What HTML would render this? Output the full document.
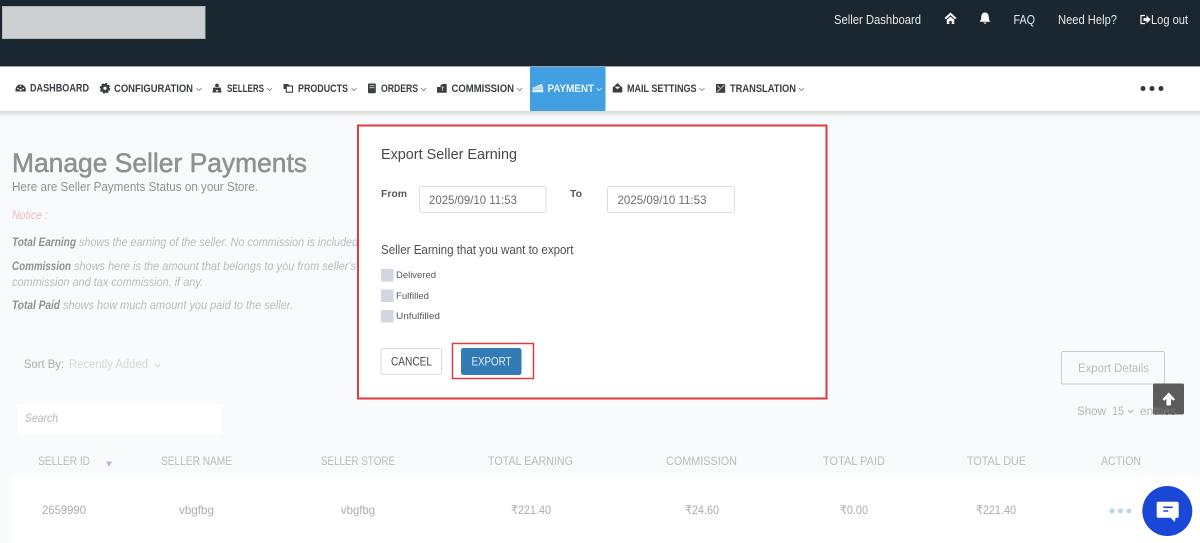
<!DOCTYPE html>
<html><head><meta charset="utf-8"><title>Manage Seller Payments</title>
<style>
html,body{margin:0;padding:0;width:1200px;height:543px;overflow:hidden;background:#f9fafc}
svg{display:block;position:absolute;left:0;top:0;filter:blur(.3px)}
text{font-family:"Liberation Sans",sans-serif;white-space:pre}
.n{font-size:11px;font-weight:bold;fill:#3b3f44}
.t{font-size:12.5px;fill:#e6e9eb}
.h{font-size:12px;fill:#b9bcbf}
.r{font-size:12px;fill:#a9acaf}
.p{font-size:11.5px;font-style:italic;fill:#b9bcbe}
.b{font-size:11.5px;font-style:italic;font-weight:bold;fill:#8e9194}
.c{fill:none;stroke:#777;stroke-width:.8}
</style></head><body>
<svg width="1200" height="543" viewBox="0 0 1200 543" xmlns="http://www.w3.org/2000/svg">
<defs><linearGradient id="s" x1="0" x2="0" y1="0" y2="1"><stop offset="0" stop-color="#d8dad6"/><stop offset="1" stop-color="#f9fafc"/></linearGradient>
<linearGradient id="e" gradientUnits="userSpaceOnUse" x1="1140" x2="1176" y1="0" y2="0"><stop offset="0" stop-color="#b5b7ba"/><stop offset=".36" stop-color="#b5b7ba"/><stop offset=".37" stop-color="#7a7b7d"/><stop offset="1" stop-color="#7a7b7d"/></linearGradient></defs>
<rect width="1200" height="543" fill="#f9fafc"/>
<!-- header -->
<rect width="1200" height="66" fill="#1a2731"/>
<rect x="2.5" y="6.5" width="202.500" height="32" fill="#cdd0d2" stroke="#b4b8ba"/>
<text class="t" x="834" y="24" textLength="87" lengthAdjust="spacingAndGlyphs">Seller Dashboard</text>
<path d="M950.500 12.500 L944.500 18 L946 19.300 L950.500 15.300 L955 19.300 L956.500 18 Z M946.800 19.800 L950.500 16.600 L954.200 19.800 L954.200 24 L951.700 24 L951.700 21 L949.300 21 L949.300 24 L946.800 24Z" fill="#fff"/>
<path d="M985 12.500 C987.800 12.500 988.800 15 988.800 17.500 C988.800 19.800 989.800 21 990.500 21.800 L979.500 21.800 C980.200 21 981.200 19.800 981.200 17.500 C981.200 15 982.200 12.500 985 12.500Z M983.200 22.500 L986.800 22.500 L985 24Z" fill="#fff"/>
<text class="t" x="1013.500" y="24" textLength="21.500" lengthAdjust="spacingAndGlyphs">FAQ</text>
<text class="t" x="1058" y="24" textLength="59" lengthAdjust="spacingAndGlyphs">Need Help?</text>
<path d="M1145 15.500 L1141 15.500 L1141 23.500 L1145 23.500" fill="none" stroke="#fff" stroke-width="1.200"/>
<path d="M1143.500 18 L1146.500 18 L1146.500 15.500 L1150.700 19.500 L1146.500 23.500 L1146.500 21 L1143.500 21Z" fill="#fff"/>
<text class="t" x="1151" y="24" textLength="37" lengthAdjust="spacingAndGlyphs">Log out</text>
<!-- nav -->
<rect y="111" width="1200" height="6" fill="url(#s)"/>
<rect y="66" width="1200" height="45" fill="#fff"/>
<rect y="66" width="1200" height="1" fill="#9aa3a8"/>
<rect x="530" y="67" width="75.500" height="44" fill="#42a0e2"/>
<!-- dashboard -->
<path d="M15.500 91.500 L15.500 89 A5.200 5.200 0 0 1 25.800 89 L25.800 91.500 Z" fill="#3b3f44"/>
<circle cx="18" cy="88.500" r=".8" fill="#fff"/><circle cx="20.600" cy="86.300" r=".8" fill="#fff"/><circle cx="23.200" cy="88.500" r=".8" fill="#fff"/><circle cx="20.600" cy="89.800" r="1" fill="#fff"/>
<text class="n" x="30" y="91.700" textLength="59" lengthAdjust="spacingAndGlyphs">DASHBOARD</text>
<!-- gear -->
<circle cx="105" cy="88.300" r="3" fill="none" stroke="#3b3f44" stroke-width="2.800"/><circle cx="105" cy="88.300" r="4.500" fill="none" stroke="#3b3f44" stroke-width="1.700" stroke-dasharray="2.200 1.300"/>
<text class="n" x="114" y="92.200" textLength="79" lengthAdjust="spacingAndGlyphs">CONFIGURATION</text>
<path class="c" d="M196.500 88 L199 90.500 L201.500 88"/>
<!-- sellers -->
<circle cx="217" cy="85.500" r="1.900" fill="#3b3f44"/><path d="M214.700 88.500 Q217 87 219.300 88.500 L219.600 90H214.400Z" fill="#3b3f44"/>
<circle cx="214.500" cy="89" r="1.600" fill="#3b3f44"/><circle cx="219.500" cy="89" r="1.600" fill="#3b3f44"/><path d="M212.300 92.500 Q212.500 90 214.500 90 Q216.600 90 216.800 92.500Z M217.200 92.500 Q217.400 90 219.500 90 Q221.500 90 221.700 92.500Z" fill="#3b3f44"/>
<text class="n" x="227" y="92.200" textLength="37" lengthAdjust="spacingAndGlyphs">SELLERS</text>
<path class="c" d="M267 88 L269.500 90.500 L272 88"/>
<!-- products -->
<path d="M283.500 84 L288 84 L288 86 L286 86 L286 89 L283.500 89Z" fill="#3b3f44"/>
<rect x="286.300" y="86" width="6.200" height="6.200" fill="#fff" stroke="#3b3f44" stroke-width="1.100"/><path d="M288 84 L290.500 86 L288 86Z" fill="#3b3f44"/>
<text class="n" x="298" y="92.200" textLength="50" lengthAdjust="spacingAndGlyphs">PRODUCTS</text>
<path class="c" d="M351.500 88 L354 90.500 L356.500 88"/>
<!-- orders -->
<rect x="368" y="83.500" width="7.800" height="9.800" rx="1" fill="#3b3f44"/><path d="M369.500 85.700H374.300M369.500 87.700H374.300" stroke="#d5d5d5" stroke-width=".8"/>
<text class="n" x="381" y="92.200" textLength="37" lengthAdjust="spacingAndGlyphs">ORDERS</text>
<path class="c" d="M421 88 L423.500 90.500 L426 88"/>
<!-- commission -->
<path d="M437 87 L440.500 87 L440.500 85 L443 84 L446.700 84 L446.700 92.800 L437 92.800Z" fill="#3b3f44"/><path d="M442.500 86V91M441.500 87.800H444" stroke="#ddd" stroke-width=".7"/>
<text class="n" x="451.500" y="92.200" textLength="62.500" lengthAdjust="spacingAndGlyphs">COMMISSION</text>
<path class="c" d="M517 88 L519.500 90.500 L522 88"/>
<!-- payment -->
<path d="M534 86.800 L542 84 L542.800 86.800Z M532.500 87.300 H543.300 V88.700H532.500Z M532.500 89.400H543.300V92.300H532.500Z" fill="#e8f3fb"/>
<text class="n" x="547.500" y="92.200" textLength="46.500" lengthAdjust="spacingAndGlyphs" style="fill:#eaf4fb">PAYMENT</text>
<path d="M596.500 88 L599 90.500 L601.500 88" fill="none" stroke="#e8f3fb" stroke-width=".8"/>
<!-- mail -->
<path d="M612.700 87.500 L617.500 83 L622.300 87.500 L622.300 92.500 L612.700 92.500Z" fill="#3b3f44"/><path d="M614.700 86.800 H620.300 L617.500 89.200Z" fill="#fff"/>
<text class="n" x="627" y="92.200" textLength="69.500" lengthAdjust="spacingAndGlyphs">MAIL SETTINGS</text>
<path class="c" d="M699.500 88 L702 90.500 L704.500 88"/>
<!-- translation -->
<rect x="716" y="84" width="9.200" height="8.800" fill="#3b3f44"/><path d="M717 92 L724.500 84.800 M717.300 85.500 L719.800 88" stroke="#ccc" stroke-width=".9"/>
<text class="n" x="730" y="92.200" textLength="66" lengthAdjust="spacingAndGlyphs">TRANSLATION</text>
<path class="c" d="M799 88 L801.500 90.500 L804 88"/>
<circle cx="1143" cy="88.500" r="2.500" fill="#33373b"/><circle cx="1152" cy="88.500" r="2.500" fill="#33373b"/><circle cx="1161" cy="88.500" r="2.500" fill="#33373b"/>
<!-- page -->
<text x="12" y="172" textLength="295" lengthAdjust="spacingAndGlyphs" style="font-size:27px;fill:#8f9193;stroke:#8f9193;stroke-width:.55px">Manage Seller Payments</text>
<text x="12" y="191" textLength="246" lengthAdjust="spacingAndGlyphs" style="font-size:12.500px;fill:#909295">Here are Seller Payments Status on your Store.</text>
<text x="12" y="219" textLength="36" lengthAdjust="spacingAndGlyphs" style="font-size:11.500px;font-style:italic;fill:#efb9bd">Notice :</text>
<text class="b" x="12" y="246" textLength="64" lengthAdjust="spacingAndGlyphs">Total Earning</text>
<text class="p" x="79" y="246" textLength="279" lengthAdjust="spacingAndGlyphs">shows the earning of the seller. No commission is included</text>
<text class="b" x="12" y="270" textLength="59" lengthAdjust="spacingAndGlyphs">Commission</text>
<text class="p" x="74" y="270" textLength="282" lengthAdjust="spacingAndGlyphs">shows here is the amount that belongs to you from seller's</text>
<text class="p" x="12" y="286" textLength="191" lengthAdjust="spacingAndGlyphs">commission and tax commission, if any.</text>
<text class="b" x="12" y="309" textLength="48" lengthAdjust="spacingAndGlyphs">Total Paid</text>
<text class="p" x="63" y="309" textLength="230" lengthAdjust="spacingAndGlyphs">shows how much amount you paid to the seller.</text>
<text x="24" y="368" textLength="40" lengthAdjust="spacingAndGlyphs" style="font-size:11.500px;fill:#a9abae">Sort By:</text>
<text x="69" y="368" textLength="79" lengthAdjust="spacingAndGlyphs" style="font-size:11.500px;fill:#d5d7da">Recently Added</text>
<path d="M155 364 L157.500 366.500 L160 364" fill="none" stroke="#d0d2d5" stroke-width=".9"/>
<rect x="1061.500" y="351.500" width="103" height="32.500" rx="2" fill="none" stroke="#c9cbce"/>
<text x="1078" y="372" textLength="71" lengthAdjust="spacingAndGlyphs" style="font-size:12px;fill:#b9bbbe">Export Details</text>
<text class="r" x="1077" y="415" textLength="29" lengthAdjust="spacingAndGlyphs" style="fill:#b5b7ba">Show</text>
<text class="r" x="1112" y="415" textLength="12" lengthAdjust="spacingAndGlyphs" style="fill:#b5b7ba">15</text>
<path d="M1128 410 L1130.500 412.500 L1133 410" fill="none" stroke="#b0b2b5" stroke-width="1"/>
<rect x="18" y="404" width="203" height="31" rx="2" fill="#fff"/>
<text x="25" y="422" textLength="33" lengthAdjust="spacingAndGlyphs" style="font-size:11.500px;font-style:italic;fill:#b5b7ba">Search</text>
<text class="h" x="38" y="465" textLength="52" lengthAdjust="spacingAndGlyphs">SELLER ID</text>
<path d="M106 461.500 H112 L109 467Z" fill="#b8bcd4"/>
<text class="h" x="161" y="465" textLength="71" lengthAdjust="spacingAndGlyphs">SELLER NAME</text>
<text class="h" x="321" y="465" textLength="74" lengthAdjust="spacingAndGlyphs">SELLER STORE</text>
<text class="h" x="488" y="465" textLength="85" lengthAdjust="spacingAndGlyphs">TOTAL EARNING</text>
<text class="h" x="666" y="465" textLength="71" lengthAdjust="spacingAndGlyphs">COMMISSION</text>
<text class="h" x="823" y="465" textLength="62" lengthAdjust="spacingAndGlyphs">TOTAL PAID</text>
<text class="h" x="967" y="465" textLength="59" lengthAdjust="spacingAndGlyphs">TOTAL DUE</text>
<text class="h" x="1101" y="465" textLength="40" lengthAdjust="spacingAndGlyphs">ACTION</text>
<rect x="12" y="476" width="1188" height="67" fill="#fff"/>
<text class="r" x="42" y="514" textLength="44" lengthAdjust="spacingAndGlyphs">2659990</text>
<text class="r" x="179" y="514" textLength="35" lengthAdjust="spacingAndGlyphs">vbgfbg</text>
<text class="r" x="341" y="514" textLength="34" lengthAdjust="spacingAndGlyphs">vbgfbg</text>
<text class="r" x="511" y="514" textLength="40" lengthAdjust="spacingAndGlyphs">₹221.40</text>
<text class="r" x="685" y="514" textLength="34" lengthAdjust="spacingAndGlyphs">₹24.60</text>
<text class="r" x="840" y="514" textLength="28" lengthAdjust="spacingAndGlyphs">₹0.00</text>
<text class="r" x="976" y="514" textLength="40" lengthAdjust="spacingAndGlyphs">₹221.40</text>
<circle cx="1112" cy="511" r="2.500" fill="#b5d8e3"/><circle cx="1120.500" cy="511" r="2.500" fill="#b5d8e3"/><circle cx="1129" cy="511" r="2.500" fill="#b5d8e3"/>
<!-- dialog -->
<rect x="358" y="125.500" width="468.500" height="273" fill="#fff" stroke="#e2393f" stroke-width="2"/>
<text x="381" y="159" textLength="136" lengthAdjust="spacingAndGlyphs" style="font-size:15px;fill:#45494d">Export Seller Earning</text>
<text x="381" y="197" textLength="26" lengthAdjust="spacingAndGlyphs" style="font-size:10.500px;font-weight:bold;fill:#55585c">From</text>
<rect x="419.500" y="186.500" width="126.500" height="26" rx="2" fill="#fff" stroke="#dcdee1"/>
<text x="429" y="204" textLength="88" lengthAdjust="spacingAndGlyphs" style="font-size:12px;fill:#6a6d71">2025/09/10 11:53</text>
<text x="570" y="197" textLength="12" lengthAdjust="spacingAndGlyphs" style="font-size:10.500px;font-weight:bold;fill:#55585c">To</text>
<rect x="607.500" y="186.500" width="127" height="26" rx="2" fill="#fff" stroke="#dcdee1"/>
<text x="617.500" y="204" textLength="89" lengthAdjust="spacingAndGlyphs" style="font-size:12px;fill:#6a6d71">2025/09/10 11:53</text>
<text x="381" y="254" textLength="192.500" lengthAdjust="spacingAndGlyphs" style="font-size:12.500px;fill:#4c5054">Seller Earning that you want to export</text>
<rect x="381" y="269" width="12.500" height="12.500" fill="#d3d6e0"/>
<text x="396" y="278" textLength="40" lengthAdjust="spacingAndGlyphs" style="font-size:9.500px;fill:#55585c">Delivered</text>
<rect x="381" y="289.500" width="12.500" height="12.500" fill="#d3d6e0"/>
<text x="396" y="299" textLength="33" lengthAdjust="spacingAndGlyphs" style="font-size:9.500px;fill:#55585c">Fulfilled</text>
<rect x="381" y="310" width="12.500" height="12.500" fill="#d3d6e0"/>
<text x="396" y="319" textLength="44" lengthAdjust="spacingAndGlyphs" style="font-size:9.500px;fill:#55585c">Unfulfilled</text>
<rect x="381" y="348.500" width="60.500" height="26" rx="2" fill="#fff" stroke="#d9dbde"/>
<text x="391" y="365.500" textLength="41" lengthAdjust="spacingAndGlyphs" style="font-size:12px;fill:#45494d">CANCEL</text>
<rect x="452.500" y="343.500" width="81" height="35" fill="none" stroke="#e2393f" stroke-width="1.500"/>
<rect x="461" y="348" width="60.500" height="27" rx="2.500" fill="#337ab7"/>
<text x="471.500" y="365.500" textLength="40" lengthAdjust="spacingAndGlyphs" style="font-size:12px;fill:#e3eef7">EXPORT</text>
<!-- floating -->
<rect x="1153" y="383.500" width="31" height="31" rx="1.500" fill="#555" fill-opacity=".96"/>
<text x="1140" y="415" textLength="36" lengthAdjust="spacingAndGlyphs" style="font-size:12px;fill:url(#e)">entries</text>
<path d="M1168.700 392.500 L1174.300 398.500 Q1175.200 399.600 1174 400.300 Q1173 400.800 1172.200 400 L1171 398.800 L1171 404.500 Q1171 405.500 1170 405.500 L1167.400 405.500 Q1166.400 405.500 1166.400 404.500 L1166.400 398.800 L1165.200 400 Q1164.400 400.800 1163.400 400.300 Q1162.200 399.600 1163.100 398.500 Z" fill="#fff"/>
<circle cx="1167.300" cy="511" r="25" fill="#1a47d6"/>
<path d="M1158.200 501.700 H1177.200 A1.500 1.500 0 0 1 1178.700 503.200 V516.200 A1.500 1.500 0 0 1 1177.200 517.700 H1175.500 L1174.800 522 L1170.700 517.700 H1158.200 A1.500 1.500 0 0 1 1156.700 516.200 V503.200 A1.500 1.500 0 0 1 1158.200 501.700Z" fill="#fff"/>
<path d="M1163.300 507.300 H1172.700 M1163.300 511 H1168.300" stroke="#1a47d6" stroke-width="1.600"/>
</svg>
</body></html>
